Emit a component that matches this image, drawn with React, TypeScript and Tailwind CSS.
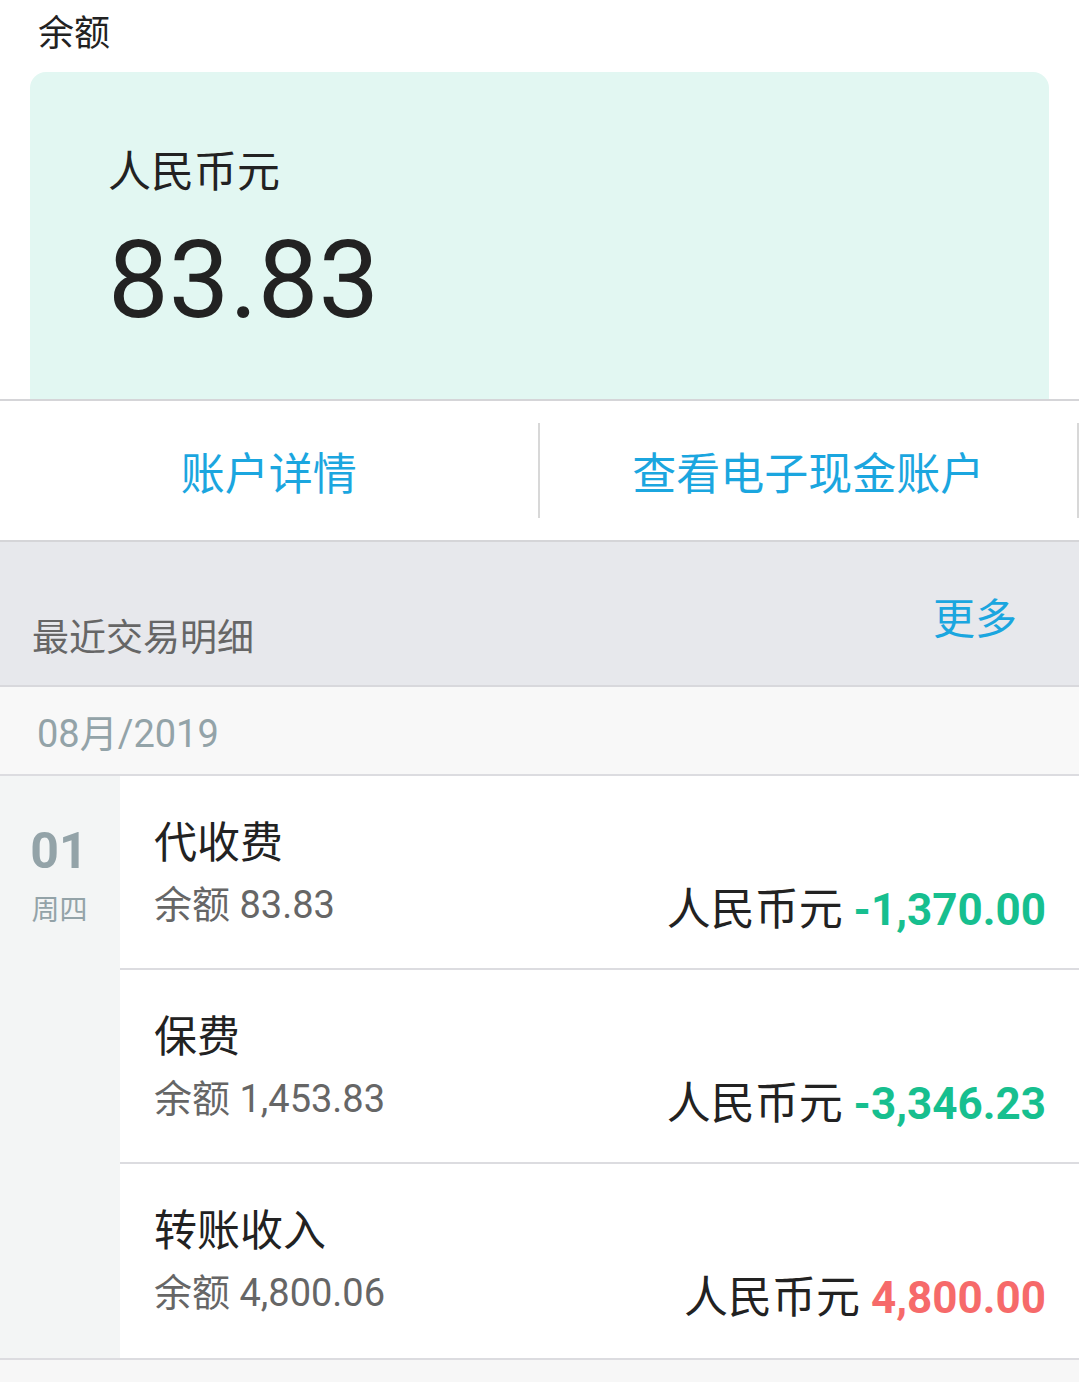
const font = "font-['Roboto','Noto_Sans_CJK_SC',sans-serif]";

type Tx = {
  title: string;
  balance: string;
  amount: string;
  income: boolean;
};

const txs: Tx[] = [
  { title: "代收费", balance: "83.83", amount: "-1,370.00", income: false },
  { title: "保费", balance: "1,453.83", amount: "-3,346.23", income: false },
  { title: "转账收入", balance: "4,800.06", amount: "4,800.00", income: true },
];

function TxRow({ tx, last }: { tx: Tx; last: boolean }) {
  return (
    <div
      className={`h-[194px] pl-[34px] pr-[33px] pt-[40px] ${
        last ? "" : "border-b-2 border-[#dcdce0]"
      }`}
    >
      <div className="text-[43px] leading-[54px] text-[#222]">{tx.title}</div>
      <div className="flex items-end justify-between mt-[11px]">
        <div className="text-[38px] leading-[48px] text-[#666]">余额 {tx.balance}</div>
        <div className="text-[44px] leading-[52px] text-[#222] mb-[-7px]">
          人民币元{" "}
          <span
            className={`font-bold ${tx.income ? "text-[#f66a6a]" : "text-[#17bf8f]"}`}
          >
            {tx.amount}
          </span>
        </div>
      </div>
    </div>
  );
}

export default function App() {
  return (
    <div className={`${font} w-[1079px] min-h-[1382px] bg-[#f7f7f7]`}>
      <div className="bg-white">
        <div className="px-[38px] pt-[12px] h-[72px] text-[36px] leading-[44px] text-[#222]">
          余额
        </div>
        <div className="mx-[30px] h-[327px] rounded-t-[16px] bg-[#e2f7f2] pl-[78px] pt-[72px]">
          <div className="text-[43px] leading-[56px] text-[#222]">人民币元</div>
          <div className="text-[108px] leading-[120px] text-[#222] mt-[20px]">83.83</div>
        </div>
      </div>

      <div className="flex h-[143px] bg-white border-t-2 border-b-2 border-[#d5d5d8] items-center">
        <div className="flex-1 h-[95px] flex items-center justify-center border-r-2 border-[#d8d8d8] text-[44px] text-[#1ba6df] pt-[8px]">
          账户详情
        </div>
        <div className="flex-1 h-[95px] flex items-center justify-center border-r-2 border-[#d8d8d8] text-[44px] text-[#1ba6df] pt-[8px]">
          查看电子现金账户
        </div>
      </div>

      <div className="h-[145px] bg-[#e7e8ec] border-b-2 border-[#d8d8dc] flex justify-between px-[32px]">
        <div className="text-[37px] leading-[46px] text-[#666] pt-[74px]">最近交易明细</div>
        <div className="text-[42px] leading-[52px] text-[#1ba6df] pt-[52px] pr-[30px]">更多</div>
      </div>

      <div className="h-[89px] bg-[#f8f8f8] border-b-2 border-[#dcdce0] px-[37px] pt-[24px] text-[38px] leading-[46px] text-[#93a3a8]">
        08月/2019
      </div>

      <div className="flex border-b-2 border-[#dcdce0]">
        <div className="w-[120px] bg-[#f3f5f5] flex flex-col items-center pt-[46px]">
          <div className="text-[50px] leading-[58px] font-bold text-[#93a3a8] mr-[2px]">01</div>
          <div className="text-[28px] leading-[38px] text-[#93a3a8] mt-[12px] mr-[1px]">周四</div>
        </div>
        <div className="flex-1 bg-white">
          {txs.map((tx, i) => (
            <TxRow key={i} tx={tx} last={i === txs.length - 1} />
          ))}
        </div>
      </div>
    </div>
  );
}
